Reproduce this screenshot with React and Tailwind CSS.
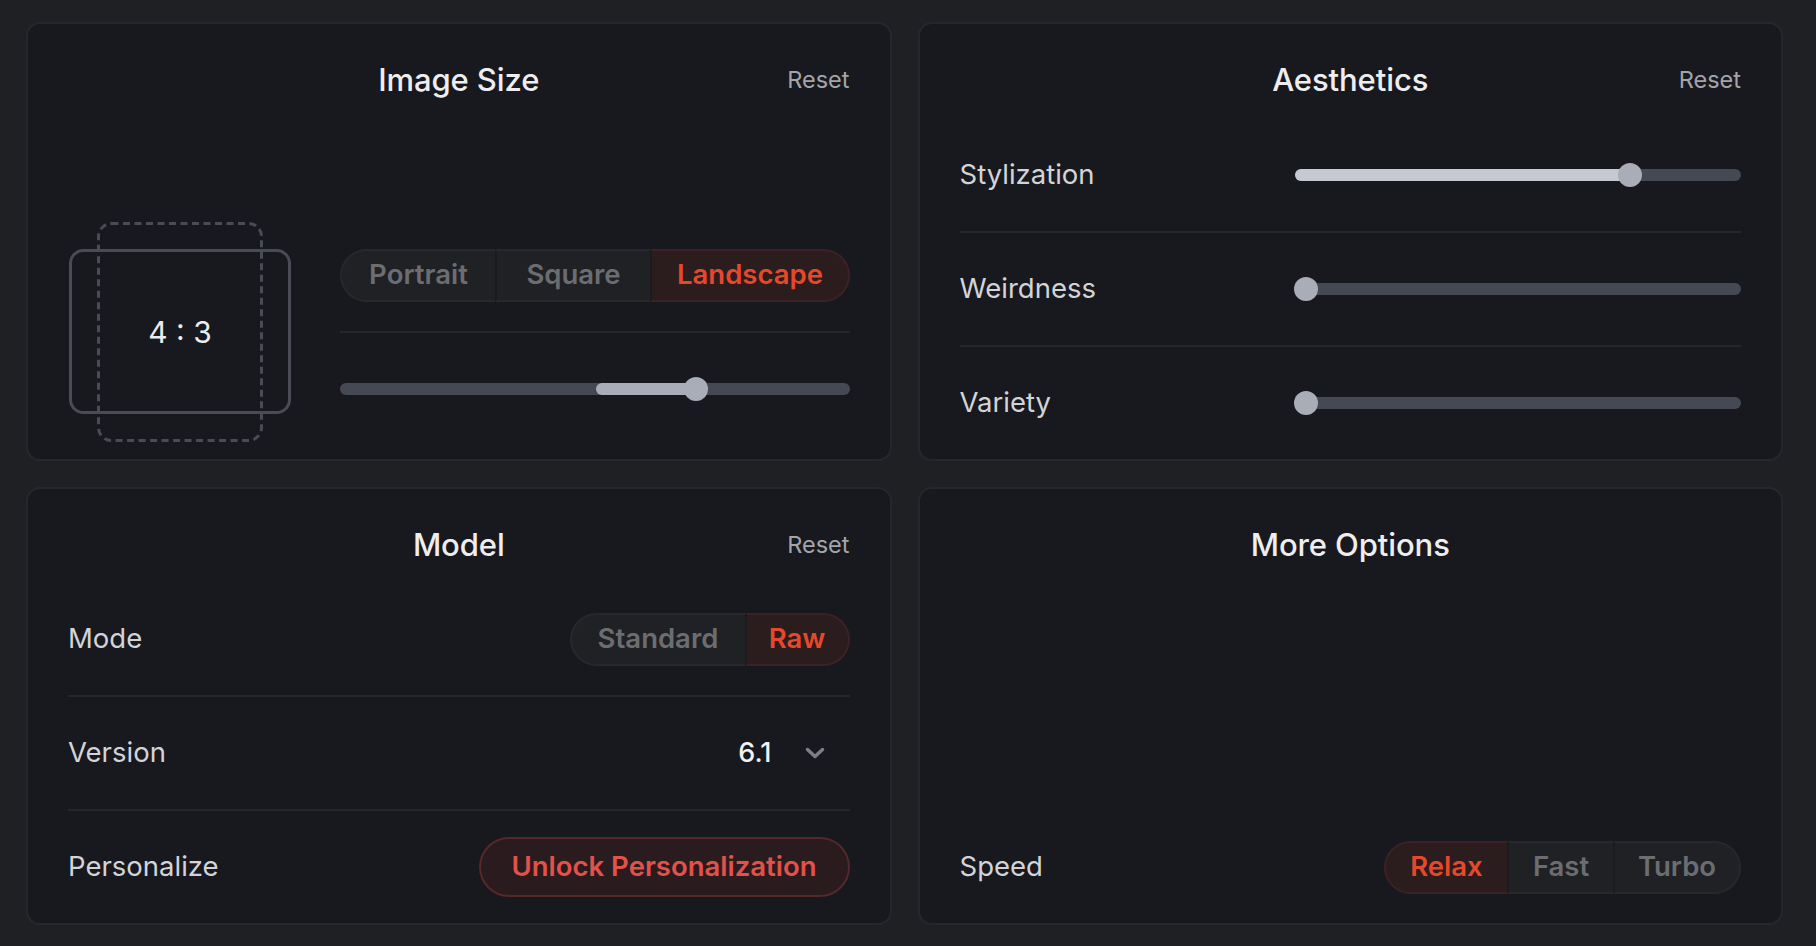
import { useState } from "react";

const font = { fontFamily: "Inter, 'Noto Sans', sans-serif" };

function Card({ title, reset = true, children }) {
  return (
    <div className="flex flex-col rounded-[14px] border-2 border-[#26272c] bg-[#18191e] px-[40px] min-h-0">
      <div className="grid grid-cols-[1fr_auto_1fr] items-center pt-[38px]">
        <div />
        <h2 className="text-[31px] leading-[36px] font-medium text-[#eeeef1] tracking-[-0.1px]">
          {title}
        </h2>
        {reset ? (
          <button className="justify-self-end text-[23.5px] leading-[36px] text-[#a3a5ab]">
            Reset
          </button>
        ) : (
          <div />
        )}
      </div>
      <div className="flex-1 flex flex-col justify-end">{children}</div>
    </div>
  );
}

function Segmented({ items, active, widths }) {
  return (
    <div className="flex h-[53px]">
      {items.map((it, i) => {
        const on = it === active;
        const first = i === 0;
        const last = i === items.length - 1;
        return (
          <button
            key={it}
            style={{ width: widths[i] }}
            className={[
              "h-full flex items-center justify-center border-y-2 text-[27.5px] font-semibold",
              on
                ? "bg-[#2b1c1e] border-[#3c2224] text-[#e6482c]"
                : "bg-[#202125] border-[#27282c] text-[#6c6d71]",
              first ? "rounded-l-full border-l-2" : "border-l-2 border-l-[#1a1b1f]",
              last ? "rounded-r-full border-r-2" : "",
            ].join(" ")}
          >
            {it}
          </button>
        );
      })}
    </div>
  );
}

function Divider() {
  return <div className="h-[2px] bg-[#25262b]" />;
}

function Row({ label, children }) {
  return (
    <div className="h-[112px] flex items-center">
      <div className="w-[335px] shrink-0 text-[27.5px] text-[#d3d4d8]">{label}</div>
      <div className="flex-1 flex items-center justify-end">{children}</div>
    </div>
  );
}

function Slider({ fill, value }) {
  // fill: [start, end, colour] in px from track start, value: thumb centre px
  return (
    <div className="relative w-full h-[12px] rounded-full bg-[#454953]">
      {fill && (
        <div
          className="absolute top-0 h-[12px] rounded-full"
          style={{ left: fill[0], width: fill[1] - fill[0], background: fill[2] }}
        />
      )}
      <div
        className="absolute top-1/2 -translate-y-1/2 w-[24px] h-[24px] rounded-full bg-[#a9adb7]"
        style={{ left: value - 12 }}
      />
    </div>
  );
}

function AspectPreview() {
  return (
    <div className="grid place-items-center w-[224px] h-[222px] shrink-0">
      <svg
        width="224"
        height="222"
        viewBox="0 0 224 222"
        className="col-start-1 row-start-1"
        fill="none"
      >
        <rect x="2.5" y="29.5" width="219" height="162" rx="13" stroke="#494c54" strokeWidth="3" />
        <rect
          x="30.5"
          y="2.5"
          width="163"
          height="217"
          rx="13"
          stroke="#494c54"
          strokeWidth="3"
          strokeDasharray="7 4.5"
        />
      </svg>
      <span className="col-start-1 row-start-1 text-[30px] text-[#ececef]">4 : 3</span>
    </div>
  );
}

export default function App() {
  const [ratio] = useState("Landscape");

  return (
    <div
      style={font}
      className="h-[946px] bg-[#1f2024] pl-[26px] pr-[33px] pt-[22px] pb-[21px] grid grid-cols-2 grid-rows-[439px_438px] gap-[26px]"
    >
      <Card title="Image Size">
        <div className="flex items-center gap-[48px] mb-[14px]">
          <AspectPreview />
          <div className="flex-1 flex flex-col">
            <div className="h-[112px] flex items-center">
              <Segmented
                items={["Portrait", "Square", "Landscape"]}
                active={ratio}
                widths={[155, 155, 200]}
              />
            </div>
            <Divider />
            <div className="h-[112px] flex items-center">
              <Slider fill={[256, 356, "#a9adb7"]} value={356} />
            </div>
          </div>
        </div>
      </Card>

      <Card title="Aesthetics">
        <Row label="Stylization">
          <Slider fill={[0, 335, "#c6c9d1"]} value={335} />
        </Row>
        <Divider />
        <Row label="Weirdness">
          <Slider value={11} />
        </Row>
        <Divider />
        <Row label="Variety">
          <Slider value={11} />
        </Row>
      </Card>

      <Card title="Model">
        <Row label="Mode">
          <Segmented items={["Standard", "Raw"]} active="Raw" widths={[175, 105]} />
        </Row>
        <Divider />
        <Row label="Version">
          <span className="text-[27px] font-medium text-[#f2f2f4]">6.1</span>
          <svg
            width="20"
            height="12"
            viewBox="0 0 20 12"
            className="ml-[33px] mr-[25px]"
            fill="none"
          >
            <path
              d="M2.5 2.5l7.5 7 7.5-7"
              stroke="#7c7f8a"
              strokeWidth="3.5"
              strokeLinecap="round"
              strokeLinejoin="round"
            />
          </svg>
        </Row>
        <Divider />
        <Row label="Personalize">
          <button className="w-[371px] h-[60px] rounded-full border-2 border-[#56282a] bg-[#2a1b1e] text-[27.5px] font-semibold text-[#e2524a]">
            Unlock Personalization
          </button>
        </Row>
      </Card>

      <Card title="More Options" reset={false}>
        <Row label="Speed">
          <Segmented items={["Relax", "Fast", "Turbo"]} active="Relax" widths={[123, 106, 128]} />
        </Row>
      </Card>
    </div>
  );
}
